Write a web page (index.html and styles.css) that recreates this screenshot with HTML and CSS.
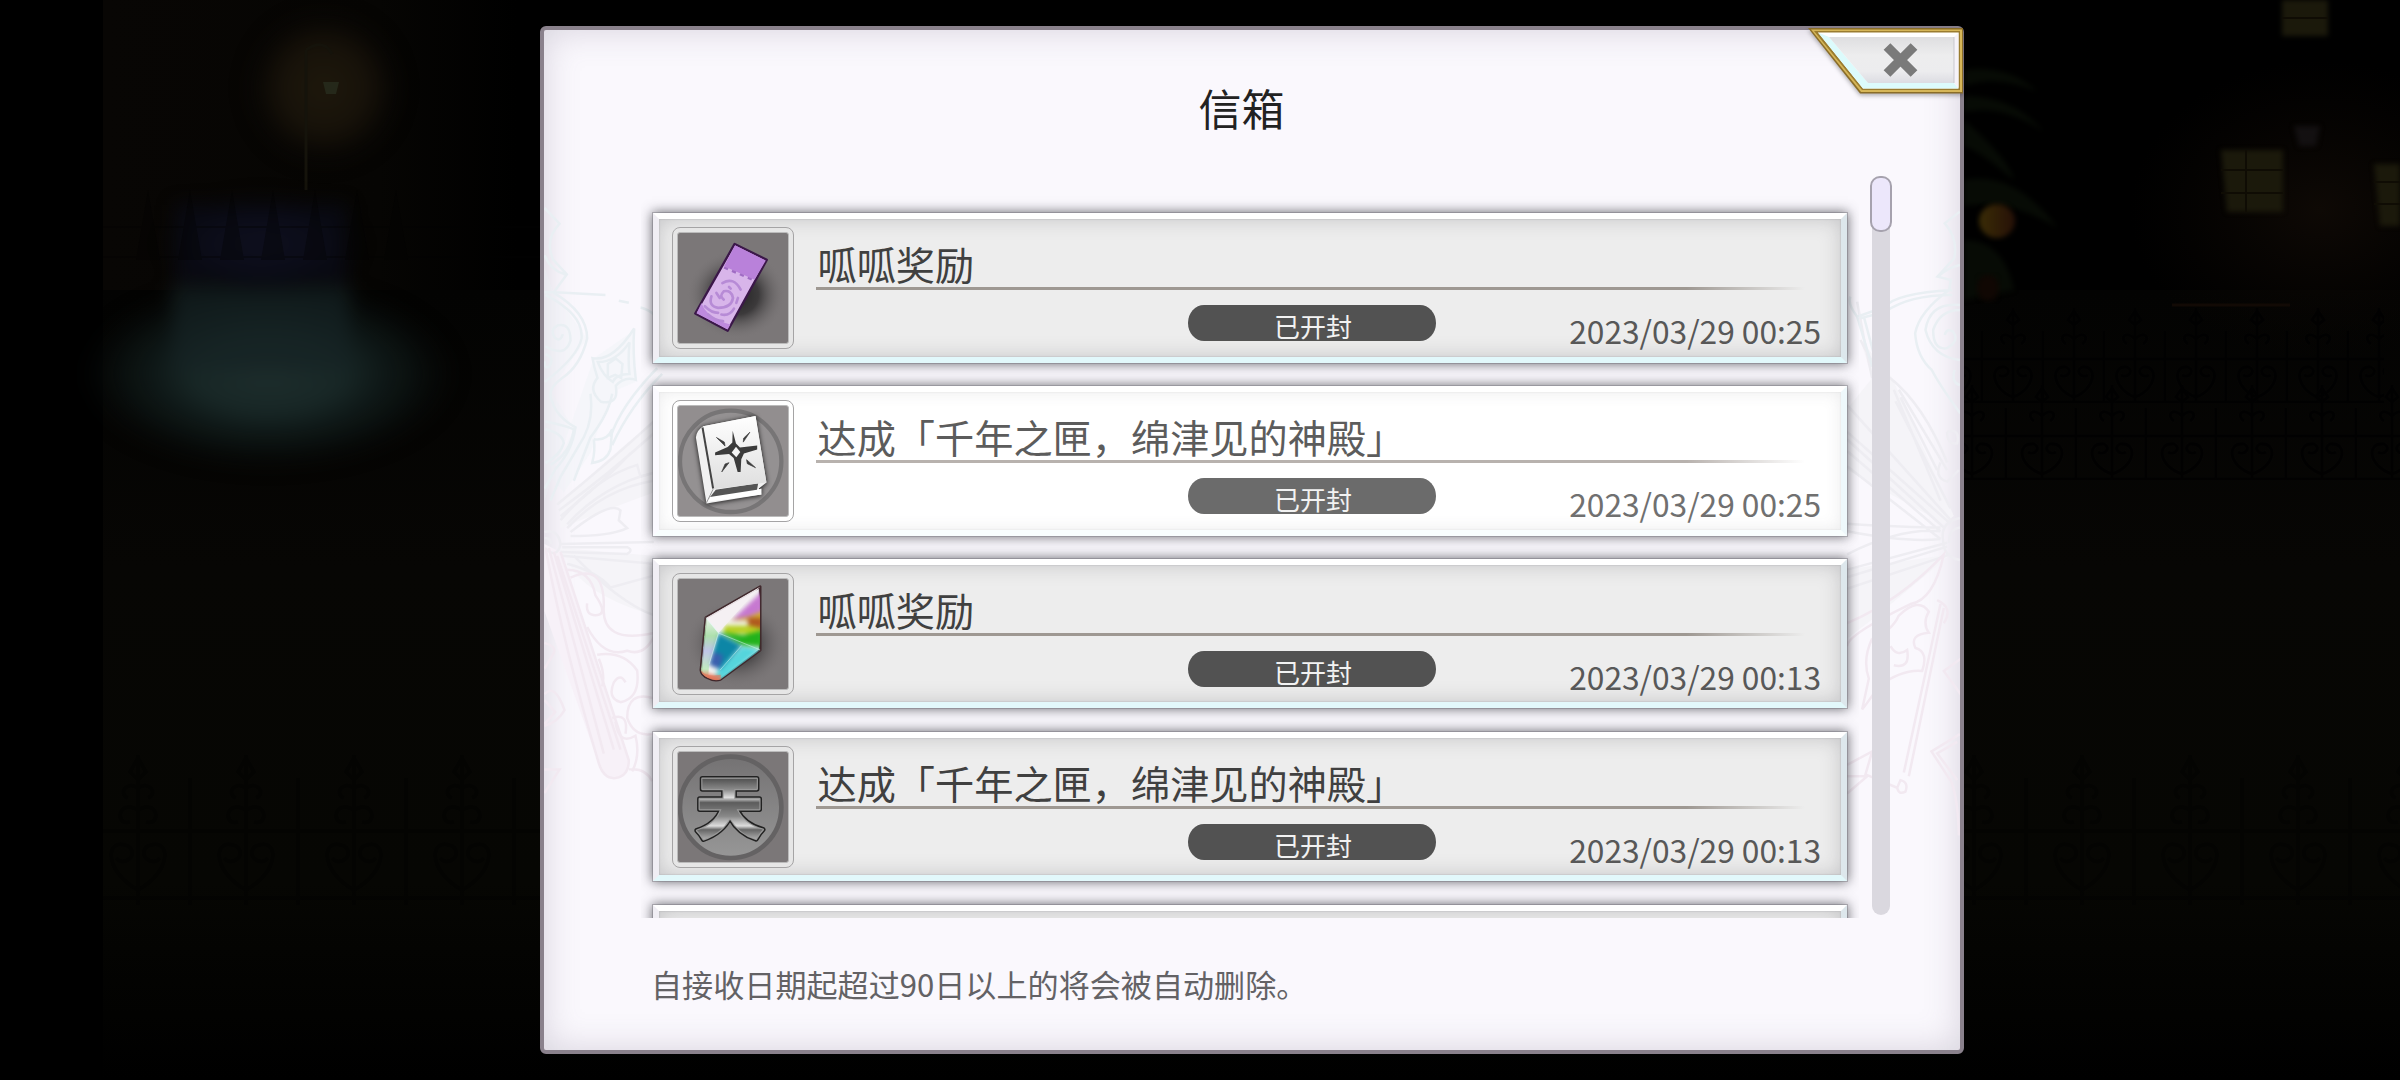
FILE: index.html
```html
<!DOCTYPE html>
<html lang="zh-CN">
<head>
    <meta charset="UTF-8">
    <meta name="viewport" content="width=device-width, initial-scale=1.0">
    <title>信箱</title>
    <link rel="stylesheet" href="styles.css">
</head>
<body>
    <!-- Dimmed park behind the dialog -->
    <svg class="scene" viewBox="0 0 2400 1080" aria-hidden="true">
        <defs>
            <radialGradient id="lamp"><stop offset="0" stop-color="#1e180c"/><stop offset=".6" stop-color="#161109"/><stop offset="1" stop-color="#080604" stop-opacity="0"/></radialGradient>
            <radialGradient id="pond"><stop offset="0" stop-color="#1d2d2c"/><stop offset=".4" stop-color="#182726"/><stop offset=".75" stop-color="#0d1615" stop-opacity=".7"/><stop offset="1" stop-color="#070b0a" stop-opacity="0"/></radialGradient>
            <radialGradient id="night"><stop offset="0" stop-color="#0e0f1e"/><stop offset=".6" stop-color="#0b0c18"/><stop offset="1" stop-color="#07080c" stop-opacity="0"/></radialGradient>
            <linearGradient id="ground" x2="0" y2="1"><stop offset="0" stop-color="#030302"/><stop offset=".35" stop-color="#070604"/><stop offset=".75" stop-color="#060603"/><stop offset="1" stop-color="#000"/></linearGradient>
            <linearGradient id="sky" x2="1"><stop offset="0" stop-color="#080604"/><stop offset=".12" stop-color="#060503"/><stop offset=".18" stop-color="#000"/><stop offset="1" stop-color="#000"/></linearGradient>
            <radialGradient id="house"><stop offset="0" stop-color="#0e0905"/><stop offset="1" stop-color="#0a0603" stop-opacity="0"/></radialGradient>
            <linearGradient id="lemonFill" x2="1"><stop offset="0" stop-color="#3a2c06"/><stop offset="1" stop-color="#261007"/></linearGradient>
            <filter id="soft" color-interpolation-filters="sRGB"><feGaussianBlur stdDeviation="2.5"/></filter>
            <filter id="glow" x="-30%" y="-30%" width="160%" height="160%" color-interpolation-filters="sRGB"><feGaussianBlur stdDeviation="9"/></filter>
            <pattern id="fence" width="108" height="165" patternUnits="userSpaceOnUse" x="84" y="740">
                <path class="iron" d="M0 91H108M0 158H108M54 15V165M106 38V165M54 18l-8 14 8 8 8-8zM54 48c-12-8-20 6-10 10M54 48c12-8 20 6 10 10M54 70c-20-12-24 16-8 12M54 70c20-12 24 16 8 12M54 150c-36-20-32-54-10-44 12 8-4 22-12 12M54 150c36-20 32-54 10-44-12 8 4 22 12 12"/>
            </pattern>
            <pattern id="farFence" width="61" height="100" patternUnits="userSpaceOnUse" x="2105" y="303">
                <path class="iron-far" d="M0 56H61M0 99H61M30 5V100M60 28V100M30 8l-6 9 6 5 6-5zM30 36c-10-10-16 0-8 5M30 36c10-10 16 0 8 5M30 94c-22-8-24-32-8-30 8 4 0 12-6 8M30 94c22-8 24-32 8-30-8 4 0 12 6 8"/>
            </pattern>
            <pattern id="nearFence" width="70" height="100" patternUnits="userSpaceOnUse" x="2147" y="380">
                <path class="iron-far" d="M0 56H70M0 99H70M35 5V100M69 28V100M35 8l-6 9 6 5 6-5zM35 36c-10-10-16 0-8 5M35 36c10-10 16 0 8 5M35 94c-24-8-26-32-8-30 8 4 0 12-6 8M35 94c24-8 26-32 8-30-8 4 0 12 6 8"/>
            </pattern>
        </defs>
        <rect x="103" width="2297" height="320" fill="url(#sky)"/>
        <rect x="103" y="290" width="2297" height="790" fill="url(#ground)"/>
        <ellipse cx="324" cy="88" rx="80" ry="80" fill="url(#lamp)" filter="url(#glow)"/>
        <path d="M306 50V190M306 50q18-12 26 4" fill="none" stroke="#15130b" stroke-width="3"/>
        <path d="M323 82h16l-3 12h-10z" fill="#25281a"/>
        <g filter="url(#glow)">
            <ellipse cx="268" cy="374" rx="190" ry="96" fill="url(#pond)"/>
            <rect x="172" y="285" width="178" height="85" fill="#152224" opacity=".7"/>
            <rect x="176" y="205" width="170" height="76" fill="#090a14"/>
            <ellipse cx="262" cy="244" rx="100" ry="50" fill="url(#night)"/>
        </g>
        <path class="trees" d="M148 190l12 70h-24zM190 190l12 70h-24zM232 190l12 70h-24zM273 190l12 70h-24zM315 190l12 70h-24zM357 190l12 70h-24zM396 190l12 70h-24zM103 226H540v2H103zM103 256H540v2H103z"/>
        <rect class="fence-front" x="103" y="740" width="437" height="165" fill="url(#fence)"/>
        <rect class="fence-front" x="1964" y="740" width="436" height="165" fill="url(#fence)"/>
        <ellipse cx="2320" cy="210" rx="190" ry="150" fill="url(#house)"/>
        <path d="M1964 70q44-6 74 22-40-18-74-6zM1964 96q50 0 80 36-40-28-80-20zM1964 180q50-10 94 48-50-30-94-22zM1964 120q46 40 50 60-36-30-50-34zM1964 240q40 0 50 50l-50 10z" fill="#070b05" filter="url(#soft)"/>
        <ellipse cx="1997" cy="221" rx="18" ry="17" fill="url(#lemonFill)" filter="url(#soft)"/>
        <ellipse cx="1988" cy="288" rx="11" ry="13" fill="#100703" filter="url(#soft)"/>
        <g filter="url(#soft)">
            <path d="M2221 150h62v62h-56zM2374 164h26v62h-20zM2282 0h46v36h-46z" fill="#1b190b"/>
            <path d="M2294 126h26l-4 20h-17z" fill="#131011"/>
        </g>
        <path d="M2221 170h62M2221 193h62M2246 150v62M2374 182h26M2374 204h26M2282 18h46" stroke="#0f0c04" stroke-width="2"/>
        <path d="M2172 305H2290" stroke="#120a05" stroke-width="3"/>
        <rect class="fence-back" x="1964" y="303" width="420" height="100" fill="url(#farFence)"/>
        <rect class="fence-back" x="1964" y="380" width="436" height="100" fill="url(#nearFence)"/>
    </svg>

    <main class="mailbox">
        <!-- Faint butterfly-key pattern on both edges of the paper -->
        <svg class="ornament" viewBox="544 30 1415 1020" aria-hidden="true">
            <g transform="translate(530 200) scale(.3333 .3954)">
                <path class="fill-blue" d="M190 400L310 330 315 460 260 480 210 560 180 640 100 740 60 700 130 580 60 480 170 350 70 235 42 170V760z" opacity=".3"/>
                <path class="fill-gray" d="M90 770Q220 660 370 560V740Q240 780 90 830zM90 880L370 900V1050Q200 1010 130 940z"/>
                <path class="fill-pink" d="M42 870L90 890 295 1420Q290 1460 250 1462 220 1462 205 1425L42 1040z"/>
                <g class="blue">
                    <path d="M42 20l45 40q-45 40-20 90l42 38-39 45H42M42 140q20 40 62 48M75 233l150 7M265 255l30 5M330 272q25 5 40 18"/>
                    <path d="M70 235q100 50 100 115-20 70-75 100-50 30-30 60 15 40 70 65-10 60-60 105l-33 50M45 240q115 50 108 110-10 45-110 110M45 370q60 30 75-15 0-45-38-38-25 10-10 30 16 15 25-8M45 390q30 10 10 32-14 5-12-14"/>
                    <path d="M186 400q60 10 125-75-5 60 5 130-35-10-60 15 10 50-45 40-40-30-10-60-10-25-15-50zM202 410q55 0 95-50-5 45 0 80-40 0-50 20-30-15-45-50zM232 415l24-14 20 14-4 35-18-8-22 8z"/>
                    <path d="M180 490q10 60-20 110L90 700 60 760M245 490q-10 50-65 110l-50 110M380 425Q270 520 240 600M395 440Q300 520 245 620M190 605q40 5 55-25l-5 50q-10 30-55 35 10-30 5-60M45 560q60 10 85 20-10 60-70 90M45 580q50 10 55 35-10 30-55 50"/>
                </g>
                <g class="gray">
                    <path d="M80 770Q240 660 370 560M85 785Q240 690 370 590M90 800Q250 690 300 640M110 820Q220 720 370 690M110 830Q220 730 370 710M120 840Q240 760 270 785L265 810 290 830Q240 850 120 850"/>
                    <path d="M90 810Q200 700 320 670l10 30 40-10M90 870L370 865M95 878L290 878Q310 885 290 895L90 890M95 900L370 920M130 900Q270 1020 370 1050M110 920Q200 940 240 980L370 950"/>
                    <path d="M42 840q40-10 48 30-10 40-48 10M42 855q20 0 20 15"/>
                </g>
                <g class="pink">
                    <path d="M45 880Q100 1130 205 1425q15 40 50 37 40-5 40-45L90 890M55 880L220 1400M70 890L250 1390M80 900L270 1390"/>
                    <path d="M110 935q70 0 85 65 40 50 0 50-30 0-25-30M120 955q100-40 100 70-10 100 150 70M170 1080q50 80 120 60 50 15 80-35M200 1150q80-10 120 40 10 70-50 80-40-10-20-50 20-25 35 0M205 1160q20 40 10 70M245 1310q50-15 40 40M255 1320q10 60 60 35 15 50-10 90M370 1260q-80-20-80 50 20 50 80 40M42 1250q30-30 60 40-20 30-60 40M42 1265l32 30-32 30M42 1500l45-60H42M42 1120q40 10 25 30l-25 35M295 1440q50-5 70 30"/>
                </g>
            </g>
            <g transform="translate(1840 340) scale(.3333 .3827)">
                <path class="fill-gray" d="M60 0L155 100 340 460 310 480 20 340V180L95 100zM20 600L330 560 110 720 20 780z"/>
                <g class="gray">
                    <path d="M50-100Q70 0 95 100M60 0Q110 90 150 100 250 170 320 320M160 130L300 420M165 160L330 440M175 130L320 340M180 150L290 340M20 170L330 470M20 240L330 480M20 260L310 490M20 290L300 500M20 330L300 520M20 480Q200 490 300 490M20 500Q200 530 300 520M20 560Q180 490 300 500M20 620L320 540M20 650L330 560M20 600L320 530"/>
                    <path d="M358 465q-60 10-50 60 0 40 50 50M358 490q-35 5-32 40M320 240q40-10 30 30-30 5-30-30M300 320q-20 40 20 50l35-30"/>
                </g>
                <g class="pink">
                    <path d="M20 740Q180 680 310 560 280 680 210 690 20 770 20 800M300 690L190 1130M310 700L205 1140M180 1150q25 5 15 30-20 10-25-10zM290 680q50 20 20 60"/>
                    <path d="M95 780q60-20 80-60 60-50 90-10-20 30 0 55-60 5-40 40 40 10 20 60-60-5-130 40-40 50-50 60l20-80q-20-50 10-105M150 800q20 30 50 10 10 50-40 40M365 830l-55 35 58 70M358 1030l-85 45 60 80q20 50 22 140M350 1050l-60 30 60 70M20 1110l75-35-20 60 95 35M20 1140l60 0-60 45"/>
                </g>
            </g>
            <g class="blue" transform="translate(1800 200) scale(.3333)">
                <path d="M478 35l-45 35q40 45 28 105l-50 55 40 10-5 30q-90 65-102 130 5 70 50 110 20 40 85 130M478 195q-40 10-65 35M455 270q-170 10-200 50l-85 30q-30-40-20-60M455 285q-130 0-200 50l-75 20M478 330q-60 0-80 60 0 60 40 55 40-20 20-50-20-12-25 10M478 315q-90-10-103 75 20 80 103 90M170 350l45 150M190 350l40 150"/>
                <path d="M462 510q-10 40 16 45"/>
            </g>
        </svg>

        <button class="close" type="button" aria-label="关闭">
            <svg viewBox="1804 24 162 74">
                <defs>
                    <linearGradient id="closeFace" x2="0" y2="1"><stop offset="0" stop-color="#dedee0"/><stop offset=".4" stop-color="#ededee"/><stop offset=".75" stop-color="#ececee"/><stop offset="1" stop-color="#dcdce2"/></linearGradient>
                </defs>
                <path d="M1808 28H1963V93.500H1860z" fill="#8a6d28"/>
                <path d="M1811 29.5H1962V92H1861z" fill="#d6b658"/>
                <path d="M1814 31H1960V90H1862z" fill="#9a7c30"/>
                <path d="M1818 32.500H1958.500V88.500H1863z" fill="#fff"/>
                <path d="M1818 32.500L1863 88.500H1958.500L1954 83H1868L1829 37z" fill="#dcfbfc"/>
                <path d="M1829 37H1954V83H1868z" fill="url(#closeFace)"/>
                <path d="M1954 37V83L1958.500 88V32.500z" fill="#f6f3f9"/>
                <path d="M1954 37V83" stroke="#c9c9cf"/>
                <path d="M1887 46.500L1914 73.500M1914 46.500L1887 73.500" stroke="#7a7a7a" stroke-width="9.500"/>
            </svg>
        </button>

        <h1 class="title">信箱</h1>

        <div class="content">
            <ul class="mail-list">
                <li class="mail">
                    <div class="thumb">
                        <svg viewBox="114 99 332 332">
                            <defs><radialGradient id="shade"><stop offset="0" stop-color="#222"/><stop offset=".45" stop-color="#3c3a3b"/><stop offset="1" stop-color="#7b7778" stop-opacity="0"/></radialGradient></defs>
                            <ellipse cx="290" cy="285" rx="150" ry="135" fill="url(#shade)"/>
                            <path d="M285 132L382 180 264 394 166 342z" fill="#d8b5ea" stroke="#3b1749" stroke-width="7" stroke-linejoin="round"/>
                            <path d="M286 136L379 182 345 240 253 199z" fill="#b981da"/>
                            <path d="M253 203l90 39" fill="none" stroke="#a06cc4" stroke-width="7" stroke-dasharray="13 13"/>
                            <path d="M170 341L185 310Q200 355 272 375L264 390z" fill="#be8ade"/>
                            <g fill="none" stroke="#b78bd6" stroke-width="8" stroke-linecap="round">
                                <path d="M248 250q35-20 55 20M215 290q-10 30 20 35 40 0 45-30-5-25-28-20-15 15 0 25M230 280l10 15M268 262l5 5M195 320q20 20 40 20M245 345q25 5 38-18M290 310l5-15M205 345q20 18 45 20"/>
                            </g>
                        </svg>
                    </div>
                    <div class="mail-body">
                        <h2 class="mail-title">呱呱奖励</h2>
                        <div class="mail-info">
                            <span class="status">已开封</span>
                            <time class="date">2023/03/29 00:25</time>
                        </div>
                    </div>
                </li>
                <li class="mail mail-light">
                    <div class="thumb">
                        <svg viewBox="114 617 332 332">
                            <defs>
                                <linearGradient id="cover" x2="0" y2="1"><stop offset="0" stop-color="#fff"/><stop offset="1" stop-color="#dedede"/></linearGradient>
                                <filter id="bookShadow" color-interpolation-filters="sRGB"><feDropShadow dx="0" dy="2" stdDeviation="8" flood-color="#111"/></filter>
                            </defs>
                            <circle cx="273" cy="784" r="153" fill="#949192" stroke="#777576" stroke-width="13"/>
                            <g filter="url(#bookShadow)">
                                <path d="M190 678L348 647 381 848 358 866 366 884 200 911 168 712Q170 690 190 678z" fill="#f1f1f1"/>
                                <path d="M206 898L228 870 356 850 352 872z" fill="#555"/>
                                <path d="M204 906L210 892 352 870 366 866V884z" fill="#fff"/>
                                <path d="M190 678L348 647 381 848 222 868z" fill="url(#cover)"/>
                                <path d="M188 682L220 866" stroke="#444" stroke-width="6"/>
                                <path d="M220 868L200 909" stroke="#999" stroke-width="3"/>
                            </g>
                            <path d="M279 692l10 38 12 12 52-6v12l-40 12-8 18-2 38h-9l-12-42-14-12-42 4v-9l38-16 14-14z" fill="#3b3b3b"/>
                            <path d="M289 740l13 16-12 16-14-15z" fill="#f4f4f4"/>
                            <path d="M230 712l24 14 2 12zM331 696l-19 18-1 12zM246 816l10-24 12-4zM348 803l-25-12-2-12z" fill="#3b3b3b" stroke="#3b3b3b" stroke-width="2"/>
                        </svg>
                    </div>
                    <div class="mail-body">
                        <h2 class="mail-title">达成「千年之匣，绵津见的神殿」</h2>
                        <div class="mail-info">
                            <span class="status">已开封</span>
                            <time class="date">2023/03/29 00:25</time>
                        </div>
                    </div>
                </li>
                <li class="mail">
                    <div class="thumb">
                        <svg viewBox="114 115 332 332">
                            <defs>
                                <clipPath id="gemClip"><path d="M362 138V330L242 418Q225 424 205 414 184 405 183 390L198 232z"/></clipPath>
                                <filter id="gemBlur" color-interpolation-filters="sRGB"><feGaussianBlur stdDeviation="6"/></filter>
                                <linearGradient id="gemSide" x2="0" y2="1"><stop offset="0" stop-color="#e9f3e6"/><stop offset=".3" stop-color="#9ddb9c"/><stop offset=".55" stop-color="#b3b9e6"/><stop offset=".85" stop-color="#b5e8b4"/><stop offset="1" stop-color="#e7785c"/></linearGradient>
                            </defs>
                            <ellipse cx="290" cy="310" rx="155" ry="135" fill="url(#shade)" opacity=".7"/>
                            <path d="M362 138V330L242 418Q225 424 205 414 184 405 183 390L198 232z" fill="#f4f4f2" stroke="#40282c" stroke-width="8" stroke-linejoin="round"/>
                            <g clip-path="url(#gemClip)">
                                <g filter="url(#gemBlur)">
                                    <path d="M370 150L275 240H370z" fill="#c678d0"/>
                                    <path d="M265 240h60l50 20v-50l-50 20z" fill="#cfae2c"/>
                                    <path d="M325 232h45v40h-45z" fill="#b0591f"/>
                                    <path d="M255 255h75l40 10v20l-50-5-70 0z" fill="#b7cf22"/>
                                    <path d="M240 275l70 10 60-15v50l-60-5z" fill="#22b21c"/>
                                    <path d="M236 278L306 316 241 390 208 372z" fill="#0d86a6"/>
                                    <path d="M220 335l30 10-10 40-30-10z" fill="#3a5fae"/>
                                    <path d="M310 318l55 10-120 95-20-20z" fill="#55d5dc"/>
                                    <path d="M180 395l60 15 5 20h-60z" fill="#e3765a"/>
                                </g>
                                <path d="M198 232L236 278 208 372 205 414Q184 405 183 390z" fill="url(#gemSide)" opacity=".8"/>
                                <path d="M362 138L198 232 236 278z" fill="#f5f0f3" opacity=".9"/>
                                <path d="M183 392q20 20 60 12v20h-60z" fill="#e3765a" opacity=".6"/>
                            </g>
                            <path d="M198 232L236 278 362 329M236 278L208 372M306 316L241 390" fill="none" stroke="#d9fbf6" stroke-width="2" opacity=".75"/>
                        </svg>
                    </div>
                    <div class="mail-body">
                        <h2 class="mail-title">呱呱奖励</h2>
                        <div class="mail-info">
                            <span class="status">已开封</span>
                            <time class="date">2023/03/29 00:13</time>
                        </div>
                    </div>
                </li>
                <li class="mail">
                    <div class="thumb">
                        <svg viewBox="114 633 332 332">
                            <defs>
                                <linearGradient id="metal" gradientUnits="userSpaceOnUse" x1="0" y1="700" x2="0" y2="895"><stop offset="0" stop-color="#eee"/><stop offset=".08" stop-color="#555"/><stop offset=".24" stop-color="#8c8c8c"/><stop offset=".36" stop-color="#ddd"/><stop offset=".44" stop-color="#5c5c5c"/><stop offset=".65" stop-color="#888"/><stop offset=".8" stop-color="#ddd"/><stop offset=".86" stop-color="#666"/><stop offset="1" stop-color="#aaa"/></linearGradient>
                                <linearGradient id="coin" x2="0" y2="1"><stop offset="0" stop-color="#747273"/><stop offset="1" stop-color="#979797"/></linearGradient>
                            </defs>
                            <circle cx="273" cy="800" r="153" fill="url(#coin)" stroke="#646263" stroke-width="14"/>
                            <text class="glyph glyph-edge" x="270" y="877">天</text>
                            <text class="glyph glyph-rim" x="270" y="877">天</text>
                            <text class="glyph" x="270" y="877" fill="url(#metal)">天</text>
                        </svg>
                    </div>
                    <div class="mail-body">
                        <h2 class="mail-title">达成「千年之匣，绵津见的神殿」</h2>
                        <div class="mail-info">
                            <span class="status">已开封</span>
                            <time class="date">2023/03/29 00:13</time>
                        </div>
                    </div>
                </li>
                <li class="mail"></li>
            </ul>
            <div class="scrollbar"><div class="scroll-thumb"></div></div>
        </div>

        <p class="notice">自接收日期起超过90日以上的将会被自动删除。</p>
    </main>
</body>
</html>
```

FILE: styles.css
```css
* {
    box-sizing: border-box;
}
body {
    margin: 0;
    height: 1080px;
    overflow: hidden;
    background: #000;
    font-family: "Noto Sans CJK SC", sans-serif;
}
.scene {
    position: absolute;
    top: 0;
    left: 0;
    width: 2400px;
    height: 1080px;
}
.iron {
    fill: none;
    stroke: #010101;
    stroke-width: 4;
}
.iron-far {
    fill: none;
    stroke: #010101;
    stroke-width: 3;
}
.fence-front {
    opacity: .5;
}
.fence-back {
    opacity: .9;
}
.trees {
    fill: #020203;
    opacity: .35;
}

/* dialog */
.mailbox {
    position: relative;
    width: 1424px;
    height: 1028px;
    margin: 26px 0 0 539.500px;
    border: 4px solid #8a818c;
    border-radius: 6px;
    background: #faf8fd;
    box-shadow: inset 0 0 34px rgba(110, 100, 125, .25);
    float: left;
}
.ornament {
    position: absolute;
    top: 0;
    left: 0;
    width: 1416px;
    height: 1020px;
}
.ornament path {
    vector-effect: non-scaling-stroke;
}
.blue, .gray, .pink {
    fill: none;
    stroke-width: 2.500;
}
.blue {
    stroke: #e9eff3;
}
.gray {
    stroke: #eeedf2;
}
.pink {
    stroke: #f2e9f1;
}
.fill-blue {
    fill: #ecf3f6;
}
.fill-gray {
    fill: #f5f4f8;
}
.fill-pink {
    fill: #f7f1f8;
}
.close {
    position: absolute;
    top: -6px;
    right: -6px;
    width: 162px;
    height: 74px;
    padding: 0;
    border: 0;
    background: none;
    filter: drop-shadow(0 2px 2px rgba(0, 0, 0, .3));
}
.close svg {
    display: block;
}
.title {
    position: relative;
    margin: 45px 0 0;
    padding-right: 20px;
    font-size: 43px;
    font-weight: 400;
    line-height: 64px;
    text-align: center;
    color: #222;
}

/* mail list */
.content {
    position: relative;
    display: flex;
    height: 779px;
    margin-left: 97px;
}
.mail-list {
    width: 1218px;
    height: 779px;
    margin: 0;
    padding: 74.400px 11.500px 0 12px;
    overflow: hidden;
    list-style: none;
}
.mail {
    display: flex;
    height: 149.500px;
    margin-bottom: 23.300px;
    padding: 8px 20px 0 13px;
    border: 6px solid;
    border-color: #fff #dde7ec #e2f8fb #f0eef4;
    background: #ededed;
    box-shadow: 0 0 0 1px rgba(110, 110, 118, .4), 0 0 11px 1px rgba(40, 40, 48, .68),
        inset 0 0 1px 1px rgba(120, 120, 125, .15), inset 0 0 20px rgba(90, 90, 98, .28);
}
.mail-light {
    border-color: #fff #eef8fb #f8fefe #fbfaff;
    background: #fff;
    box-shadow: 0 0 0 1px rgba(110, 110, 118, .35), 0 0 11px 1px rgba(40, 40, 48, .65),
        inset 0 0 1px 1px rgba(120, 120, 125, .06), inset 0 0 16px rgba(90, 90, 98, .12);
}
.thumb {
    flex: none;
    width: 122px;
    height: 122px;
    padding: 4px;
    border: 1.500px solid #a5a4a5;
    border-radius: 8px;
    background: #e6e6e6;
}
.thumb svg {
    display: block;
    width: 112px;
    height: 112px;
    border: 1px solid #bbb;
    border-radius: 3px;
    background: #7b7778;
}
.mail-light .thumb {
    background: #fff;
}
.mail-light .thumb svg {
    background: #928e8f;
}
.glyph {
    font-family: "Noto Sans CJK JP", sans-serif;
    font-size: 206px;
    font-weight: 900;
    text-anchor: middle;
}
.glyph-edge {
    fill: #222;
    stroke: #222;
    stroke-width: 16;
    stroke-linejoin: round;
}
.glyph-rim {
    fill: #aaa;
    stroke: #999;
    stroke-width: 7;
    stroke-linejoin: round;
}
.mail-body {
    flex: 1;
    margin-left: 22px;
}
.mail-title {
    position: relative;
    height: 63px;
    margin: 0 16px 0 0;
    padding-left: 2px;
    font-size: 39.200px;
    font-weight: 400;
    line-height: 73px;
    white-space: nowrap;
    color: #404040;
}
.mail-title::after {
    content: "";
    position: absolute;
    left: 0;
    bottom: 0;
    width: 100%;
    height: 3px;
    background: linear-gradient(to right, #9e9892 88%, rgba(158, 152, 146, 0));
}
.mail-light .mail-title {
    color: #5c5c5c;
}
.mail-light .mail-title::after {
    background: linear-gradient(to right, #b8b2ae 88%, rgba(184, 178, 174, 0));
}
.mail-info {
    display: flex;
    align-items: flex-start;
    padding: 14.800px 0 0 372px;
}
.status {
    width: 248px;
    height: 36px;
    padding-left: 3px;
    border-radius: 16px / 18px;
    background: #525252;
    color: #f2f2f2;
    font-size: 26px;
    line-height: 41px;
    text-align: center;
}
.mail-light .status {
    background: #6b6b6b;
}
.date {
    margin-left: auto;
    font-size: 31.700px;
    line-height: 50px;
    color: #585858;
}
.mail-light .date {
    color: #707070;
}

/* scrollbar */
.scrollbar {
    width: 18px;
    height: 739px;
    margin: 37px 0 0 13px;
    border-radius: 9px;
    background: #dad8df;
}
.scroll-thumb {
    width: 22px;
    height: 56px;
    margin-left: -2px;
    border: 2px solid #a6a2ae;
    border-radius: 10px;
    background: #ece7fb;
}
.notice {
    position: relative;
    margin: 42px 0 0 107.500px;
    font-size: 31.100px;
    line-height: 48px;
    color: #636265;
}
```
